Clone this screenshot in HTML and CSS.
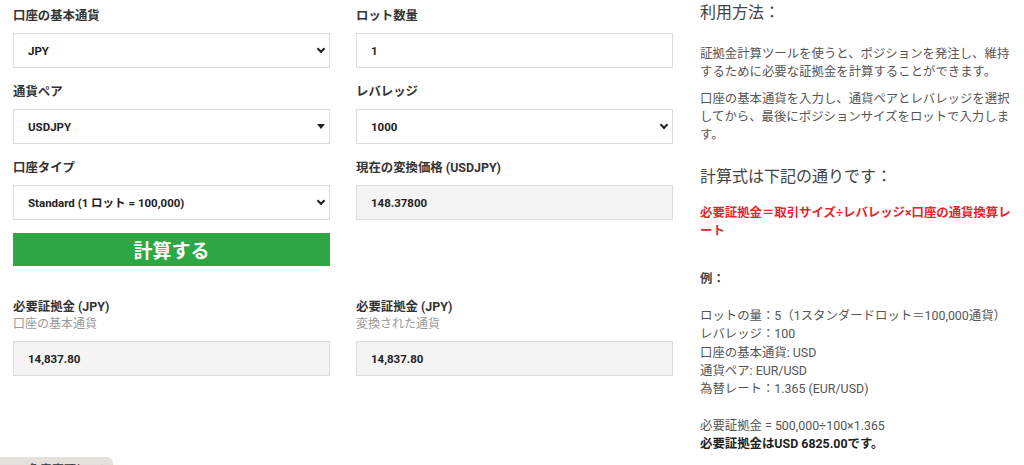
FILE: index.html
```html
<!DOCTYPE html>
<html lang="ja">
<head>
  <meta charset="UTF-8">
  <meta name="viewport" content="width=device-width, initial-scale=1.0">
  <title>証拠金計算ツール</title>
  <link rel="stylesheet" href="styles.css">
</head>
<body>
  <div class="page">
    <div class="calc">
      <div class="form-grid">
        <div class="field">
          <label>口座の基本通貨</label>
          <div class="select-wrap chevron">
            <select><option>JPY</option></select>
          </div>
        </div>
        <div class="field">
          <label>ロット数量</label>
          <input class="box" type="text" value="1">
        </div>

        <div class="field">
          <label>通貨ペア</label>
          <div class="select-wrap triangle">
            <select><option>USDJPY</option></select>
          </div>
        </div>
        <div class="field">
          <label>レバレッジ</label>
          <div class="select-wrap chevron">
            <select><option>1000</option></select>
          </div>
        </div>

        <div class="field">
          <label>口座タイプ</label>
          <div class="select-wrap chevron">
            <select><option>Standard (1 ロット = 100,000)</option></select>
          </div>
          <button class="calc-btn">計算する</button>
        </div>
        <div class="field">
          <label>現在の変換価格 (USDJPY)</label>
          <input class="box readonly" type="text" value="148.37800" readonly>
        </div>
      </div>

      <div class="result-grid">
        <div class="result">
          <label>必要証拠金 (JPY)</label>
          <span class="sub">口座の基本通貨</span>
          <input class="box readonly" type="text" value="14,837.80" readonly>
        </div>
        <div class="result">
          <label>必要証拠金 (JPY)</label>
          <span class="sub">変換された通貨</span>
          <input class="box readonly" type="text" value="14,837.80" readonly>
        </div>
      </div>

      <div class="bottom-tab">免責事項について</div>
    </div>

    <aside class="guide">
      <h3>利用方法：</h3>
      <p>証拠金計算ツールを使うと、ポジションを発注し、維持するために必要な証拠金を計算することができます。</p>
      <p>口座の基本通貨を入力し、通貨ペアとレバレッジを選択してから、最後にポジションサイズをロットで入力します。</p>

      <h3 class="formula-title">計算式は下記の通りです：</h3>
      <p class="formula">必要証拠金＝取引サイズ÷レバレッジ×口座の通貨換算レート</p>

      <p class="example-head">例：</p>
      <p class="example">ロットの量：5（1スタンダードロット＝100,000通貨）<br>
        レバレッジ：100<br>
        口座の基本通貨: USD<br>
        通貨ペア: EUR/USD<br>
        為替レート：1.365 (EUR/USD)<br>
        <br>
        必要証拠金 = 500,000÷100×1.365<br>
        <strong>必要証拠金はUSD 6825.00です。</strong></p>
    </aside>
  </div>
</body>
</html>
```

FILE: styles.css
```css
body {
  margin: 0;
  font-family: Roboto, "Noto Sans CJK JP", sans-serif;
  background-color: #fff;
  color: #333;
  overflow: hidden;
}
.page {
  display: flex;
  padding: 6px 0 0 13px;
}
.calc {
  width: 660px;
  position: relative;
  height: 459px;
}
.form-grid {
  display: grid;
  grid-template-columns: 317px 317px;
  column-gap: 26px;
  row-gap: 14px;
}
.field label,
.result label {
  display: block;
  font-size: 12.4px;
  font-weight: bold;
  line-height: 20px;
  color: #333;
  margin-bottom: 7px;
}
.box,
.select-wrap select {
  box-sizing: border-box;
  width: 100%;
  height: 35px;
  border: 1px solid #dcdcdc;
  background: #fff;
  padding: 0 14px;
  font-family: Roboto, "Noto Sans CJK JP", sans-serif;
  font-size: 11.5px;
  font-weight: bold;
  color: #222;
  outline: none;
  display: block;
}
.readonly {
  background-color: #f4f4f4;
}
.select-wrap {
  position: relative;
}
.select-wrap select {
  appearance: none;
  -webkit-appearance: none;
  border-radius: 0;
}
.select-wrap::after {
  content: "";
  position: absolute;
  pointer-events: none;
}
.chevron::after {
  right: 6px;
  top: 13px;
  width: 4px;
  height: 4px;
  border-right: 2px solid #222;
  border-bottom: 2px solid #222;
  transform: rotate(45deg);
}
.triangle::after {
  right: 5px;
  top: 15px;
  border-left: 4px solid transparent;
  border-right: 4px solid transparent;
  border-top: 5px solid #222;
}
.calc-btn {
  display: block;
  width: 100%;
  height: 33px;
  margin-top: 13px;
  border: none;
  background-color: #2ca744;
  color: #fff;
  font-family: Roboto, "Noto Sans CJK JP", sans-serif;
  font-size: 19px;
  font-weight: bold;
  cursor: pointer;
}
.result-grid {
  display: grid;
  grid-template-columns: 317px 317px;
  column-gap: 26px;
  margin-top: 32px;
}
.result label {
  margin-bottom: 0;
  line-height: 18px;
}
.result .sub {
  display: block;
  font-size: 12px;
  line-height: 16px;
  color: #9a9a9a;
  margin-bottom: 9px;
}
.bottom-tab {
  position: absolute;
  left: -13px;
  bottom: -12px;
  width: 113px;
  height: 20px;
  padding: 5px 0 0 28px;
  box-sizing: border-box;
  background-color: #e4e0dc;
  border-radius: 0 6px 0 0;
  font-size: 12px;
  line-height: 16px;
  color: #333;
  white-space: nowrap;
  overflow: hidden;
}
.guide {
  width: 314px;
  margin-left: 27px;
  color: #555;
  font-size: 12.4px;
  line-height: 18px;
}
.guide h3 {
  margin: -4px 0 21px;
  font-size: 16px;
  font-weight: normal;
  line-height: 22px;
  color: #444;
}
.guide p {
  margin: 0 0 9px;
}
.guide .formula-title {
  margin-top: 22px;
  margin-bottom: 16px;
}
.formula {
  color: #e3262e;
  font-weight: bold;
}
.guide .example-head {
  margin-top: 30px;
  margin-bottom: 19px;
  font-weight: bold;
  color: #444;
}
.example {
  line-height: 18.3px;
}
.example strong {
  color: #222;
}
```
